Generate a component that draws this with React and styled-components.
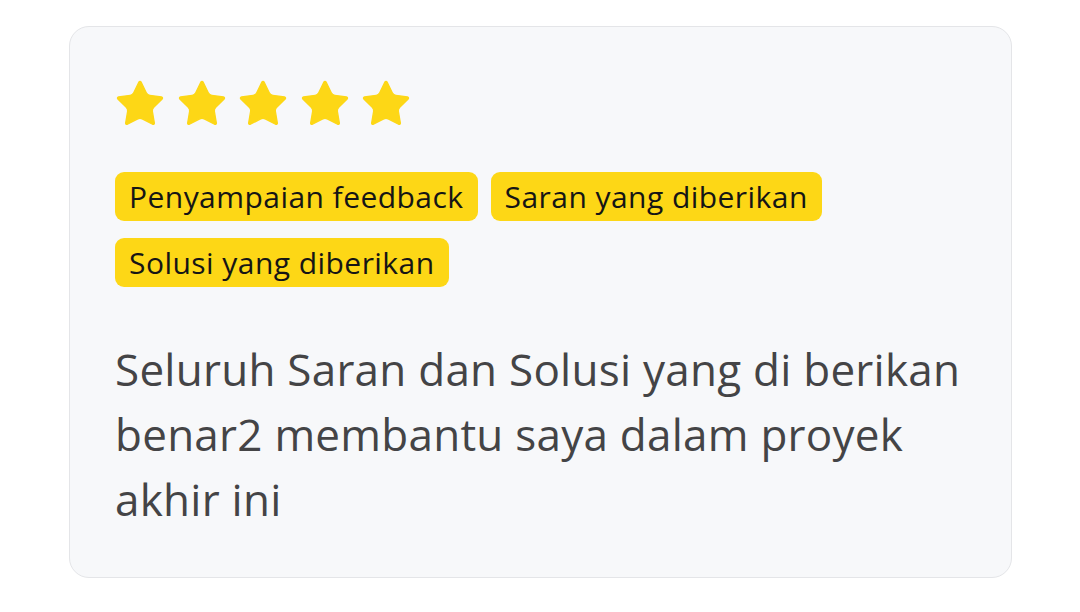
import React from "react";
import styled, { createGlobalStyle } from "styled-components";

const Global = createGlobalStyle`
  html, body { margin: 0; padding: 0; background: #ffffff; }
  body { font-family: "Open Sans", "Noto Sans", sans-serif; }
`;

const Page = styled.div`
  padding: 26px 68px 34px 69px;
`;

const Card = styled.section`
  box-sizing: border-box;
  width: 943px;
  min-height: 552px;
  background: #f7f8fa;
  border: 1.5px solid #e4e5e8;
  border-radius: 20px;
  padding: 50px 46px 40px 45px;
  display: flex;
  flex-direction: column;
`;

const Stars = styled.div`
  display: flex;
  gap: 7.5px;
  margin-left: -2px;
`;

const StarSvg = styled.svg`
  width: 54px;
  height: 54px;
  display: block;
`;

const Tags = styled.div`
  display: flex;
  flex-wrap: wrap;
  column-gap: 13px;
  row-gap: 17px;
  margin-top: 41px;
`;

const Tag = styled.span`
  background: #fdd716;
  color: #151515;
  border-radius: 9px;
  height: 49px;
  box-sizing: border-box;
  padding: 0 14px;
  display: inline-flex;
  align-items: center;
  font-size: 30px;
  letter-spacing: 0.45px;
`;

const Body = styled.p`
  margin: 50px 0 0;
  font-size: 44px;
  line-height: 65px;
  color: #444446;
  letter-spacing: 0.25px;
`;

const Star = () => (
  <StarSvg viewBox="0 0 24 24" aria-hidden="true">
    <path
      d="M11.525 2.295a.53.53 0 0 1 .95 0l2.31 4.679a2.123 2.123 0 0 0 1.595 1.16l5.166.756a.53.53 0 0 1 .294.904l-3.736 3.638a2.123 2.123 0 0 0-.611 1.878l.882 5.14a.53.53 0 0 1-.771.56l-4.618-2.428a2.122 2.122 0 0 0-1.973 0L6.396 21.01a.53.53 0 0 1-.77-.56l.881-5.139a2.122 2.122 0 0 0-.611-1.879L2.16 9.795a.53.53 0 0 1 .294-.906l5.165-.755a2.122 2.122 0 0 0 1.597-1.16z"
      fill="#fdd716"
      stroke="#fdd716"
      strokeWidth="0.6"
      strokeLinejoin="round"
    />
  </StarSvg>
);

const tags = ["Penyampaian feedback", "Saran yang diberikan", "Solusi yang diberikan"];

export default function App() {
  return (
    <>
      <Global />
      <Page>
        <Card>
          <Stars>
            {[0, 1, 2, 3, 4].map((i) => (
              <Star key={i} />
            ))}
          </Stars>
          <Tags>
            {tags.map((t) => (
              <Tag key={t}>{t}</Tag>
            ))}
          </Tags>
          <Body>
            Seluruh Saran dan Solusi yang di berikan benar2 membantu saya dalam proyek akhir ini
          </Body>
        </Card>
      </Page>
    </>
  );
}
